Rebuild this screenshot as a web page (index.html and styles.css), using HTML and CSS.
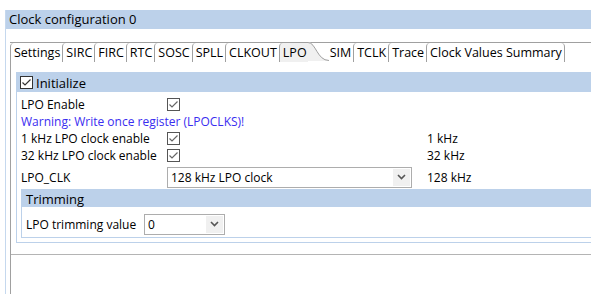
FILE: index.html
```html
<!DOCTYPE html>
<html lang="en">
<head>
    <meta charset="UTF-8">
    <meta name="viewport" content="width=device-width, initial-scale=1.0">
    <title>Clock configuration 0</title>
    <link rel="stylesheet" href="styles.css">
</head>
<body>

<div class="editor">
    <div class="title">Clock configuration 0</div>

    <div class="folder">
        <div class="tabs">
            <div class="tab">Settings</div>
            <div class="tab">SIRC</div>
            <div class="tab">FIRC</div>
            <div class="tab">RTC</div>
            <div class="tab">SOSC</div>
            <div class="tab">SPLL</div>
            <div class="tab">CLKOUT</div>
            <div class="tab active">LPO</div>
            <svg class="tab-curve" width="21" height="19" viewBox="0 0 21 19">
                <path d="M0 0 C8 0 9 18 21 18 L21 19 L0 19 Z" fill="#f0f0f0"/>
                <path d="M0 0.5 C8 0.5 9 18.5 21 18.5" fill="none" stroke="#a0a0a0"/>
            </svg>
            <div class="tab next">SIM</div>
            <div class="tab">TCLK</div>
            <div class="tab">Trace</div>
            <div class="tab last">Clock Values Summary</div>
        </div>

        <div class="panel">
            <div class="content">
                <div class="group">
                    <div class="group-head">
                        <svg class="check dark" width="13" height="13" viewBox="0 0 13 13">
                            <rect x="0.5" y="0.5" width="12" height="12" fill="#fff" stroke="#333"/>
                            <polyline points="2.5,6.5 5,9 10.5,3.5" fill="none" stroke="#333" stroke-width="1.2"/>
                        </svg>
                        <span>Initialize</span>
                    </div>

                    <div class="rows">
                        <div class="label">LPO Enable</div>
                        <div class="field">
                            <svg class="check" width="13" height="13" viewBox="0 0 13 13">
                                <rect x="0.5" y="0.5" width="12" height="12" fill="#fff" stroke="#555"/>
                                <polyline points="2.5,6.5 5,9 10.5,3.5" fill="none" stroke="#666" stroke-width="1.2"/>
                            </svg>
                        </div>
                        <div class="value"></div>

                        <div class="warning">Warning: Write once register (LPOCLKS)!</div>

                        <div class="label">1 kHz LPO clock enable</div>
                        <div class="field">
                            <svg class="check" width="13" height="13" viewBox="0 0 13 13">
                                <rect x="0.5" y="0.5" width="12" height="12" fill="#fff" stroke="#555"/>
                                <polyline points="2.5,6.5 5,9 10.5,3.5" fill="none" stroke="#666" stroke-width="1.2"/>
                            </svg>
                        </div>
                        <div class="value">1 kHz</div>

                        <div class="label">32 kHz LPO clock enable</div>
                        <div class="field">
                            <svg class="check" width="13" height="13" viewBox="0 0 13 13">
                                <rect x="0.5" y="0.5" width="12" height="12" fill="#fff" stroke="#555"/>
                                <polyline points="2.5,6.5 5,9 10.5,3.5" fill="none" stroke="#666" stroke-width="1.2"/>
                            </svg>
                        </div>
                        <div class="value">32 kHz</div>

                        <div class="label tall">LPO_CLK</div>
                        <div class="field tall">
                            <div class="combo wide">
                                <span>128 kHz LPO clock</span>
                                <span class="arrow">
                                    <svg width="9" height="6" viewBox="0 0 9 6"><polyline points="1,1 4.5,4.5 8,1" fill="none" stroke="#555" stroke-width="1.6"/></svg>
                                </span>
                            </div>
                        </div>
                        <div class="value tall">128 kHz</div>
                    </div>

                    <div class="group sub">
                        <div class="group-head">Trimming</div>
                        <div class="sub-row">
                            <span class="sub-label">LPO trimming value</span>
                            <div class="combo small">
                                <span>0</span>
                                <span class="arrow">
                                    <svg width="9" height="6" viewBox="0 0 9 6"><polyline points="1,1 4.5,4.5 8,1" fill="none" stroke="#555" stroke-width="1.6"/></svg>
                                </span>
                            </div>
                        </div>
                    </div>
                </div>
            </div>
        </div>
    </div>
</div>

</body>
</html>
```

FILE: styles.css
```css
body {
    margin: 0;
    padding: 0;
    background-color: #fff;
    color: #000;
    font-family: "Open Sans", "Noto Sans", sans-serif;
    font-size: 12px;
}

.editor {
    margin: 10px 0 0 5px;
    height: 284px;
    border-left: 1px solid #c5d8ee;
}

.title {
    height: 19px;
    line-height: 19px;
    padding-left: 3px;
    background-color: #bcd1ea;
    font-size: 13px;
}

.folder {
    padding: 13px 0 0 4px;
}

/* tab strip */
.tabs {
    display: flex;
    height: 19px;
    border-top: 1px solid #a0a0a0;
}

.tab {
    height: 19px;
    line-height: 19px;
    padding: 0 2px 0 3px;
    border-left: 1px solid #a0a0a0;
    border-top-left-radius: 4px;
    font-size: 12.5px;
    white-space: nowrap;
}

.tab.active {
    background-color: #f0f0f0;
    padding-right: 1px;
}

.tab.next {
    border-left: none;
    padding-left: 1px;
}

.tab.last {
    border-right: 1px solid #a0a0a0;
    border-top-right-radius: 4px;
}

.tab-curve {
    display: block;
    margin-top: -1px;
}

/* tab content */
.panel {
    border-left: 1px solid #a0a0a0;
    height: 233px;
}

.content {
    padding: 10px 0 11px 5px;
    border-bottom: 1px solid #b4b4b4;
}

.group {
    border: 1px solid #bcd1ea;
    border-right: none;
    padding-bottom: 4px;
}

.group-head {
    display: flex;
    align-items: center;
    gap: 3px;
    height: 19px;
    padding-left: 3px;
    background-color: #bcd1ea;
    font-size: 13px;
}

.check {
    display: block;
}

.rows {
    display: grid;
    grid-template-columns: 146px 260px auto;
    grid-auto-rows: 17px;
    padding: 4px 0 0 4px;
}

.rows > div {
    display: flex;
    align-items: center;
    white-space: nowrap;
}

.rows .tall {
    height: 22px;
    margin-top: 2px;
}

.warning {
    grid-column: 1 / 4;
    color: #3a2df0;
}

.combo {
    display: flex;
    align-items: center;
    justify-content: space-between;
    height: 19px;
    border: 1px solid #adadad;
    background-color: #fff;
    padding-left: 3px;
}

.combo.wide {
    width: 240px;
}

.combo.small {
    width: 76px;
}

.arrow {
    display: flex;
    align-items: center;
    justify-content: center;
    width: 17px;
    height: 17px;
    margin-right: 1px;
    background-color: #f0f0f0;
}

.group.sub {
    margin: 8px 0 0 4px;
    padding-bottom: 2px;
}

.sub .group-head {
    height: 17px;
    padding-left: 4px;
}

.sub-row {
    display: flex;
    align-items: center;
    padding: 6px 0 0 4px;
    height: 22px;
}

.sub-label {
    width: 118px;
}
```
